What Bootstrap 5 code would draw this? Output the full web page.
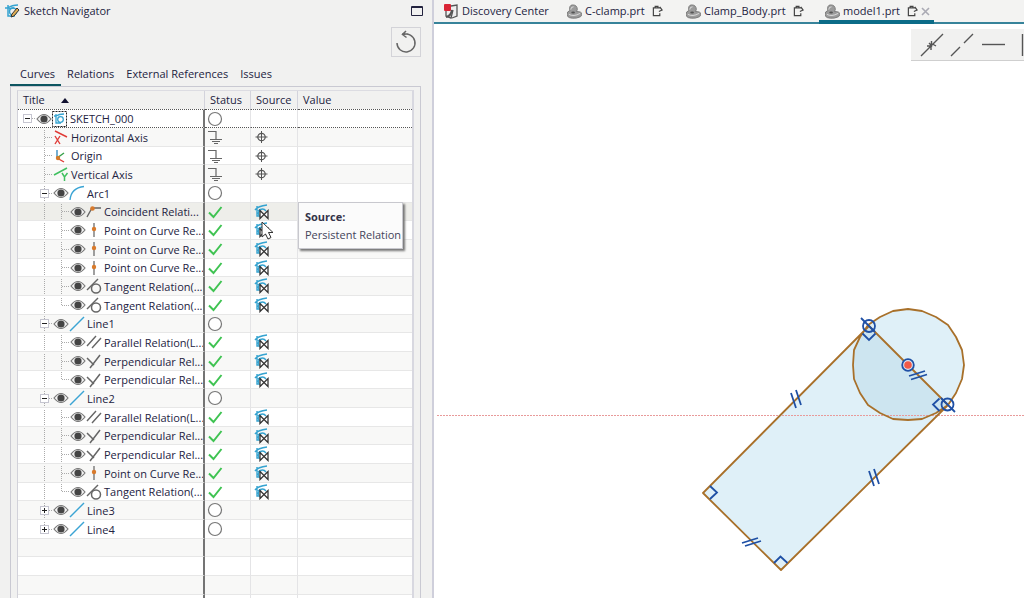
<!DOCTYPE html>
<html lang="en">
<head>
<meta charset="utf-8">
<meta name="viewport" content="width=device-width, initial-scale=1">
<title>Sketch Navigator</title>
<link href="https://cdn.jsdelivr.net/npm/bootstrap@5.3.0/dist/css/bootstrap.min.css" rel="stylesheet">
<style>
  body { font-family: "Open Sans", "Noto Sans", sans-serif; font-size: 11px; line-height: 16px; color: #23233f; background: #fff; }
  button { color: inherit; }
  svg { display: block; flex: none; }
  .navigator { flex: 0 0 434px; background: #f1f1f0; border-right: 2px solid #cfcfdb; }
  .titlebar { height: 23px; padding-left: 4px; padding-right: 9px; }
  .refresh-bar { padding: 5px 11px 6px 0; }
  .refresh { width: 30px; height: 30px; border: 1px solid #d3d3d8; background: #f1f1f0; }
  .view-tabs { padding-left: 10px; border: 0; }
  .view-tabs .nav-link { border: 0; border-bottom: 3px solid transparent; border-radius: 0; padding: 3px 6px 2px; margin: 0; color: inherit; background: none; }
  .view-tabs .nav-link.active { border-color: #0d5560; background: none; color: inherit; padding-left: 10px; }
  .frame { margin: -1px 11px 0 10px; border: 1px solid #c9c9d2; border-bottom: 0; padding: 3px 6px 0; }
  .tree { table-layout: fixed; border-left: 1px solid #d2d2da; border-right: 2px solid #d8d8e0; border-top: 1px solid #dcdce2; border-collapse: separate; border-spacing: 0; color: inherit; --bs-table-bg: transparent; }
  .tree th { height: 18px; padding: 0 0 0 5px; font-weight: 400; border: 0; border-right: 1px solid #d3d3dc; line-height: 18px; }
  .tree td { height: 19px; padding: 0 0 0 2px; border: 0; border-right: 1px solid #e4e4e6; border-bottom: 1px solid #e7e7e7; background: #fff; line-height: 17px; vertical-align: middle; position: relative; }
  .tree tr:nth-child(3n) td { height: 18px; }
  .tree tr:nth-child(even) td { background: #f8f8f7; }
  .tree th:last-child, .tree td:last-child { border-right: 0; }
  .tree tbody td:first-child { border-right: 2px solid #747474; padding: 0 0 0 1px; }
  .tree tr.hovered td { background: #eeeeea; }
  .tree tr.current td { border-bottom: 1px dotted #555; border-top: 1px dotted #555; }
  .node { height: 17px; overflow: hidden; white-space: nowrap; }
  .guide { width: 17px; height: 19px; flex: none; }
  .guide path { stroke: #aaa; stroke-dasharray: 1 1; fill: none; }
  .node span { padding-left: 2px; }
  .source-tip { left: 47px; top: -19px; width: 105px; z-index: 3; background: #fbfbfb; border: 1px solid #c8c8ce; box-shadow: 2px 2px 2px #777; padding: 5px 0 4px 6px; line-height: 18px; white-space: nowrap; color: #44445a; }
  .source-tip strong { color: #333349; }
  .pointer { left: 10px; top: 0; z-index: 4; }
  .doc-tabs { height: 24px; background: #f3f3f2; border-bottom: 2px solid #37839a; padding-left: 4px; }
  .doc-tabs .nav-link { height: 24px; padding: 2px 4px 0 6px; border-bottom: 4px solid transparent; border-radius: 0; color: inherit; gap: 3px; display: flex; align-items: center; }
  .doc-tabs .nav-link.active { border-color: #0c6c88; }
  .doc-tabs .btn-close-tab { border: 0; background: none; padding: 0; }
  .tab-home { width: 123px; }
  .tab-clamp { width: 119px; }
  .tab-body { width: 139px; }
  .tools { top: 5px; right: 0; height: 32px; width: 113px; background: #f1f1f0; border-bottom: 1px solid #cfcfcf; padding-left: 9px; overflow: hidden; }
  .tools button { border: 0; background: none; padding: 0; width: 30px; flex: none; }
</style>
</head>
<body>
<svg width="0" height="0" class="position-absolute" aria-hidden="true">
  <defs>
    <symbol id="eye" viewBox="0 0 16 16"><path d="M1 8Q8 -1 15 8Q8 17 1 8z" fill="#f4f4f4" stroke="#777" stroke-width="1.200"/><circle cx="8" cy="8" r="3.600" fill="#444"/></symbol>
    <symbol id="sketch" viewBox="0 0 16 16"><path d="M4 2v11h7M1 5h3Q8 2 14 2M5 6q3-1 5-1" fill="none" stroke="#35a3d0" stroke-width="1.500"/><circle cx="9" cy="8.500" r="3.500" fill="none" stroke="#35a3d0" stroke-width="1.500"/></symbol>
    <symbol id="sketchbox" viewBox="0 0 16 16"><rect x=".5" y=".5" width="14" height="15" fill="#fff" stroke="#222" stroke-dasharray="2 1"/><path d="M4 3v9h5M2 5h2q3-2 8-2" fill="none" stroke="#35a3d0" stroke-width="1.300"/><circle cx="8.500" cy="8.500" r="2.800" fill="none" stroke="#35a3d0" stroke-width="1.300"/></symbol>
    <symbol id="haxis" viewBox="0 0 16 16"><path d="M2 2L14 8M2 7l5 8M7 7l-5 8" stroke="#e03c38" stroke-width="1.400"/></symbol>
    <symbol id="origin" viewBox="0 0 16 16"><path d="M4 2v8" stroke="#3a8ec0" stroke-width="1.400"/><path d="M4 10l7-5" stroke="#35a048" stroke-width="1.400"/><path d="M4 10l7 4" stroke="#e03c38" stroke-width="1.400"/><circle cx="5" cy="10" r="2.200" fill="#d47a28"/></symbol>
    <symbol id="vaxis" viewBox="0 0 16 16"><path d="M1 9L14 2M9 7l2.500 4L14.500 7M11.500 10.500V15" fill="none" stroke="#40c060" stroke-width="1.500"/></symbol>
    <symbol id="arc" viewBox="0 0 16 16"><path d="M1 15Q2 3 15 1.500" fill="none" stroke="#3ba4d4" stroke-width="1.300"/></symbol>
    <symbol id="line" viewBox="0 0 16 16"><path d="M1 15L15 1" stroke="#3ba4d4" stroke-width="1.400"/></symbol>
    <symbol id="coin" viewBox="0 0 16 16"><path d="M1 13L6 4H15" fill="none" stroke="#666" stroke-width="1.400"/><circle cx="6.500" cy="4.500" r="2.300" fill="#d87a2c"/></symbol>
    <symbol id="point" viewBox="0 0 16 16"><path d="M8 1v14" stroke="#777" stroke-width="1.400"/><circle cx="8" cy="7" r="2.200" fill="#d87a2c"/></symbol>
    <symbol id="tangent" viewBox="0 0 16 16"><path d="M1 12L12 1" stroke="#666" stroke-width="1.400"/><circle cx="10" cy="10.500" r="4.500" fill="none" stroke="#666" stroke-width="1.500"/></symbol>
    <symbol id="parallel" viewBox="0 0 16 16"><path d="M1 12L10 2M6 14L15 4" stroke="#666" stroke-width="1.400"/></symbol>
    <symbol id="perp" viewBox="0 0 16 16"><path d="M1 5l7 7M4 15L14 2" stroke="#666" stroke-width="1.500"/></symbol>
    <symbol id="open" viewBox="0 0 16 16"><circle cx="8" cy="8" r="6.500" fill="#fff" stroke="#777" stroke-width="1.200"/></symbol>
    <symbol id="check" viewBox="0 0 16 16"><path d="M2 8.500L6.500 13L14.500 3" fill="none" stroke="#3fc352" stroke-width="2"/></symbol>
    <symbol id="ground" viewBox="0 0 16 16"><path d="M1 2.500h8V10M3 10.500h12M5 12.500h8M7 14.500h4" fill="none" stroke="#666" stroke-width="1.200"/></symbol>
    <symbol id="target" viewBox="0 0 16 16"><path d="M8.500 2v12M2.500 8h12" stroke="#555"/><circle cx="8.500" cy="8" r="3.700" fill="none" stroke="#555" stroke-width="1.200"/></symbol>
    <symbol id="persist" viewBox="0 0 16 16"><path d="M4 2v10h3M2 6Q5 2 14 1M5 7q5-4 8 0M6 11q-2-3 2-5" fill="none" stroke="#35a3d0" stroke-width="1.400"/><path d="M7 6.500v8L15 6.500v8z" fill="#fff" stroke="#333" stroke-width="1.300"/></symbol>
    <symbol id="part" viewBox="0 0 16 16"><path d="M0 11q0-3 3-4Q2 1 6 1q5 0 5 5l-1 2q6 0 6 3t-6 4Q0 16 0 11z" fill="#9b9b9b" stroke="#777"/><path d="M4 6q0-3 3-3M2 11q5 3 12-1" fill="none" stroke="#ddd"/><ellipse cx="6.500" cy="9" rx="2" ry="1" fill="#555"/></symbol>
    <symbol id="modified" viewBox="0 0 12 12"><path d="M8.500 8.500v2.500h-7V2.500h8M3.500 2.500V1h3v1.500M8.500 1.500l2.500 3.500l-3.500 1.500" fill="none" stroke="#444" stroke-width="1.300"/></symbol>
  </defs>
</svg>

<div class="d-flex vh-100 overflow-hidden">
  <aside class="navigator d-flex flex-column overflow-hidden">
    <header class="titlebar d-flex align-items-center justify-content-between">
      <div class="d-flex align-items-center gap-1">
        <svg width="16" height="16"><use href="#sketch"/><path d="M7 14l1-3 5-6 2 2-5 6z" fill="#dfae55" stroke="#333"/></svg>
        <span>Sketch Navigator</span>
      </div>
      <button type="button" class="border-0 bg-transparent p-0" aria-label="Maximize"><svg width="12" height="12"><path d="M.5 1.500h11v9H.5zM1 2.500h10" fill="none" stroke="#23233f"/></svg></button>
    </header>
    <div class="refresh-bar d-flex justify-content-end">
      <button type="button" class="refresh p-0 d-flex align-items-center justify-content-center" aria-label="Refresh"><svg width="24" height="24"><path d="M3 13A9 9 0 1 0 9 4.500M8 4h6M12 1L8.500 4.500l4 3" fill="none" stroke="#666" stroke-width="1.500"/></svg></button>
    </div>
    <ul class="nav view-tabs flex-nowrap" role="tablist">
      <li class="nav-item"><button type="button" role="tab" class="nav-link active">Curves</button></li>
      <li class="nav-item"><button type="button" role="tab" class="nav-link">Relations</button></li>
      <li class="nav-item"><button type="button" role="tab" class="nav-link">External References</button></li>
      <li class="nav-item"><button type="button" role="tab" class="nav-link">Issues</button></li>
    </ul>
    <section class="frame flex-fill overflow-hidden">
      <table class="tree table mb-0">
        <colgroup><col style="width:187px"><col style="width:46px"><col style="width:47px"><col></colgroup>
        <thead><tr>
          <th scope="col"><div class="d-flex align-items-center gap-3">Title <svg width="8" height="5"><path d="M0 5L4 0l4 5z" fill="#111130"/></svg></div></th>
          <th scope="col">Status</th><th scope="col">Source</th><th scope="col">Value</th>
        </tr></thead>
        <tbody id="rows"></tbody>
      </table>
    </section>
  </aside>

  <main class="flex-fill d-flex flex-column overflow-hidden">
    <nav class="doc-tabs nav flex-nowrap" aria-label="Documents">
      <a class="nav-link tab-home" href="#"><svg width="15" height="16"><path d="M7 3l6-1v11l-5 2M2 7v6l5 2 2-8" fill="#eee" stroke="#555" stroke-width="1.300"/><rect width="7" height="7" y="1" rx="1" fill="#d92535"/><path d="M2 14q5-1 6-7" fill="none" stroke="#555" stroke-width="2"/></svg>Discovery Center</a>
      <a class="nav-link tab-clamp" href="#"><svg width="15" height="15"><use href="#part"/></svg>C-clamp.prt<svg class="ms-1" width="11" height="12"><use href="#modified"/></svg></a>
      <a class="nav-link tab-body" href="#"><svg width="15" height="15"><use href="#part"/></svg>Clamp_Body.prt<svg class="ms-1" width="11" height="12"><use href="#modified"/></svg></a>
      <div class="nav-link active"><svg width="15" height="15"><use href="#part"/></svg><a href="#" class="text-reset text-decoration-none" aria-current="page">model1.prt</a><svg class="ms-1" width="11" height="12"><use href="#modified"/></svg><button type="button" class="btn-close-tab" aria-label="Close model1.prt"><svg width="9" height="9"><path d="M1 1l7 7M8 1L1 8" stroke="#aaaab4" stroke-width="1.600"/></svg></button></div>
    </nav>
    <div class="flex-fill position-relative overflow-hidden">
      <svg class="w-100 h-100" viewBox="434 24 590 574" preserveAspectRatio="xMinYMin meet" role="img" aria-label="Sketch">
        <g stroke-linejoin="round">
          <path d="M869 326L948 405L781 570L703 493z" fill="#dff0f8"/>
          <path d="M964 365L962 350L956 337L948 325L936 317L922 311L908 309L893 311L880 317L868 325L860 337L854 350L853 365L854 379L860 393L868 405L880 413L893 419L908 420L922 419L936 413L948 405L956 393L962 379z" fill="#dff0f8"/>
          <path d="M868 325L860 337L854 350L853 365L854 379L860 393L868 405L880 413L893 419L908 420L922 419L936 413L948 405z" fill="#cde5f0"/>
          <path d="M437 415.500H1024" stroke="#e89a9a" stroke-dasharray="2 1"/>
          <path d="M869 326L948 405L781 570L703 493zM964 365L962 350L956 337L948 325L936 317L922 311L908 309L893 311L880 317L868 325L860 337L854 350L853 365L854 379L860 393L868 405L880 413L893 419L908 420L922 419L936 413L948 405L956 393L962 379z" fill="none" stroke="#a8702a" stroke-width="1.800"/>
        </g>
        <g fill="none" stroke="#1f50a5" stroke-width="1.800">
          <circle cx="869" cy="326" r="6"/><path d="M861 318l14 14M862.500 333.500l6.500 6.500l6.500-6.500"/>
          <circle cx="947.500" cy="404.500" r="6"/><path d="M941 398l14 14M939.500 398.500l-6.500 6l6.500 6.500"/>
          <path d="M909 376l16-5M911 379.500l16-5M742 543l16-5M745 546l16-5M791 393l5 15M796 390l5 15M869 471l5 15M874 469l5 15"/>
          <path d="M710 486l7 6.500-7 6.500M774 563l6.500-6.500 7 6.500"/>
          <circle cx="908" cy="365" r="5.800" fill="#dce6f4"/>
        </g>
        <circle cx="908" cy="365" r="3.800" fill="#f15a48"/>
      </svg>
      <div class="tools position-absolute d-flex align-items-center" role="toolbar" aria-label="Sketch tools">
        <button type="button" aria-label="Intersection"><svg width="24" height="24"><path d="M1 23L23 1M9 10l2.500 2.500V8M16 13l-3.500-2M7 13l4 0v4" fill="none" stroke="#555" stroke-width="1.400"/></svg></button>
        <button type="button" aria-label="Collinear"><svg width="24" height="24"><path d="M1 23l9-9M14 10l9-9" stroke="#555" stroke-width="1.400"/></svg></button>
        <button type="button" aria-label="Horizontal"><svg width="26" height="24"><path d="M2 11.500h23" stroke="#555" stroke-width="1.400"/></svg></button>
        <button type="button" aria-label="Vertical"><svg width="24" height="24"><path d="M12.500 1v22" stroke="#555" stroke-width="1.400"/></svg></button>
      </div>
    </div>
  </main>
</div>

<script src="https://cdn.jsdelivr.net/npm/bootstrap@5.3.0/dist/js/bootstrap.bundle.min.js"></script>
<script>
  // Each entry: depth, icon, title, status, source, expander ("-", "+" or "").
  const P = ['point', 'Point on Curve Re...'], T = ['tangent', 'Tangent Relation(...'];
  const L = ['parallel', 'Parallel Relation(L...'], N = ['perp', 'Perpendicular Rel...'];
  const rel = r => [2, r[0], r[1], 'check', 'persist', ''];
  const top1 = (i, t, e) => [1, i, t, 'open', '', e];
  const axis = (i, t) => [1, i, t, 'ground', 'target', ''];
  const data = [
    [0, 'sketchbox', 'SKETCH_000', 'open', '', '-'],
    axis('haxis', 'Horizontal Axis'), axis('origin', 'Origin'), axis('vaxis', 'Vertical Axis'),
    top1('arc', 'Arc1', '-'), ...[['coin', 'Coincident Relati...'], P, P, P, T, T].map(rel),
    top1('line', 'Line1', '-'), ...[L, N, N].map(rel),
    top1('line', 'Line2', '-'), ...[L, N, N, P, T].map(rel),
    top1('line', 'Line3', '+'), top1('line', 'Line4', '+')
  ];
  const use = id => id ? `<svg width="16" height="16" aria-hidden="true"><use href="#${id}"/></svg>` : '';
  const guide = d => `<svg class="guide" aria-hidden="true">${d}</svg>`;
  const box = e => `<rect x="4.500" y="5.500" width="8" height="8" fill="#fff" stroke="#c5c5d0"/><path d="M6 9.500h5${e === '+' ? 'M8.500 7v5' : ''}" style="stroke:#222;stroke-dasharray:none"/>`;
  document.getElementById('rows').innerHTML = data.map((r, i) => {
    const [depth, icon, title, status, source, exp] = r;
    const next = data[i + 1], last = !next || next[0] < depth;
    let cell = '';
    if (depth > 0) cell += guide('');
    if (depth > 1) cell += guide('<path d="M8.500 0v19"/>');
    const stem = depth === 0 ? 'M9 9.500h8' : `M8.500 0v${last ? 9 : 19}M9 9.500h8`;
    cell += guide(`<path d="${stem}"/>${exp ? box(exp) : ''}`);
    if (status !== 'ground') cell += use('eye');
    cell += use(icon) + `<span>${title}</span>`;
    const tip = i === 6 ? '<div class="source-tip position-absolute" role="tooltip"><strong>Source:</strong><br>Persistent Relation</div><svg class="pointer position-absolute" width="14" height="20"><path d="M1 1v15l3.500-3 2.500 5 3-1.500-2.500-5H12z" fill="#fff" stroke="#333"/></svg>' : '';
    return `<tr class="${i === 0 ? 'current' : i === 5 ? 'hovered' : ''}"><td><div class="node d-flex align-items-center">${cell}</div></td>
      <td>${use(status)}</td><td>${use(source)}${tip}</td><td></td></tr>`;
  }).join('') + '<tr><td></td><td></td><td></td><td></td></tr>'.repeat(4);
</script>
</body>
</html>
